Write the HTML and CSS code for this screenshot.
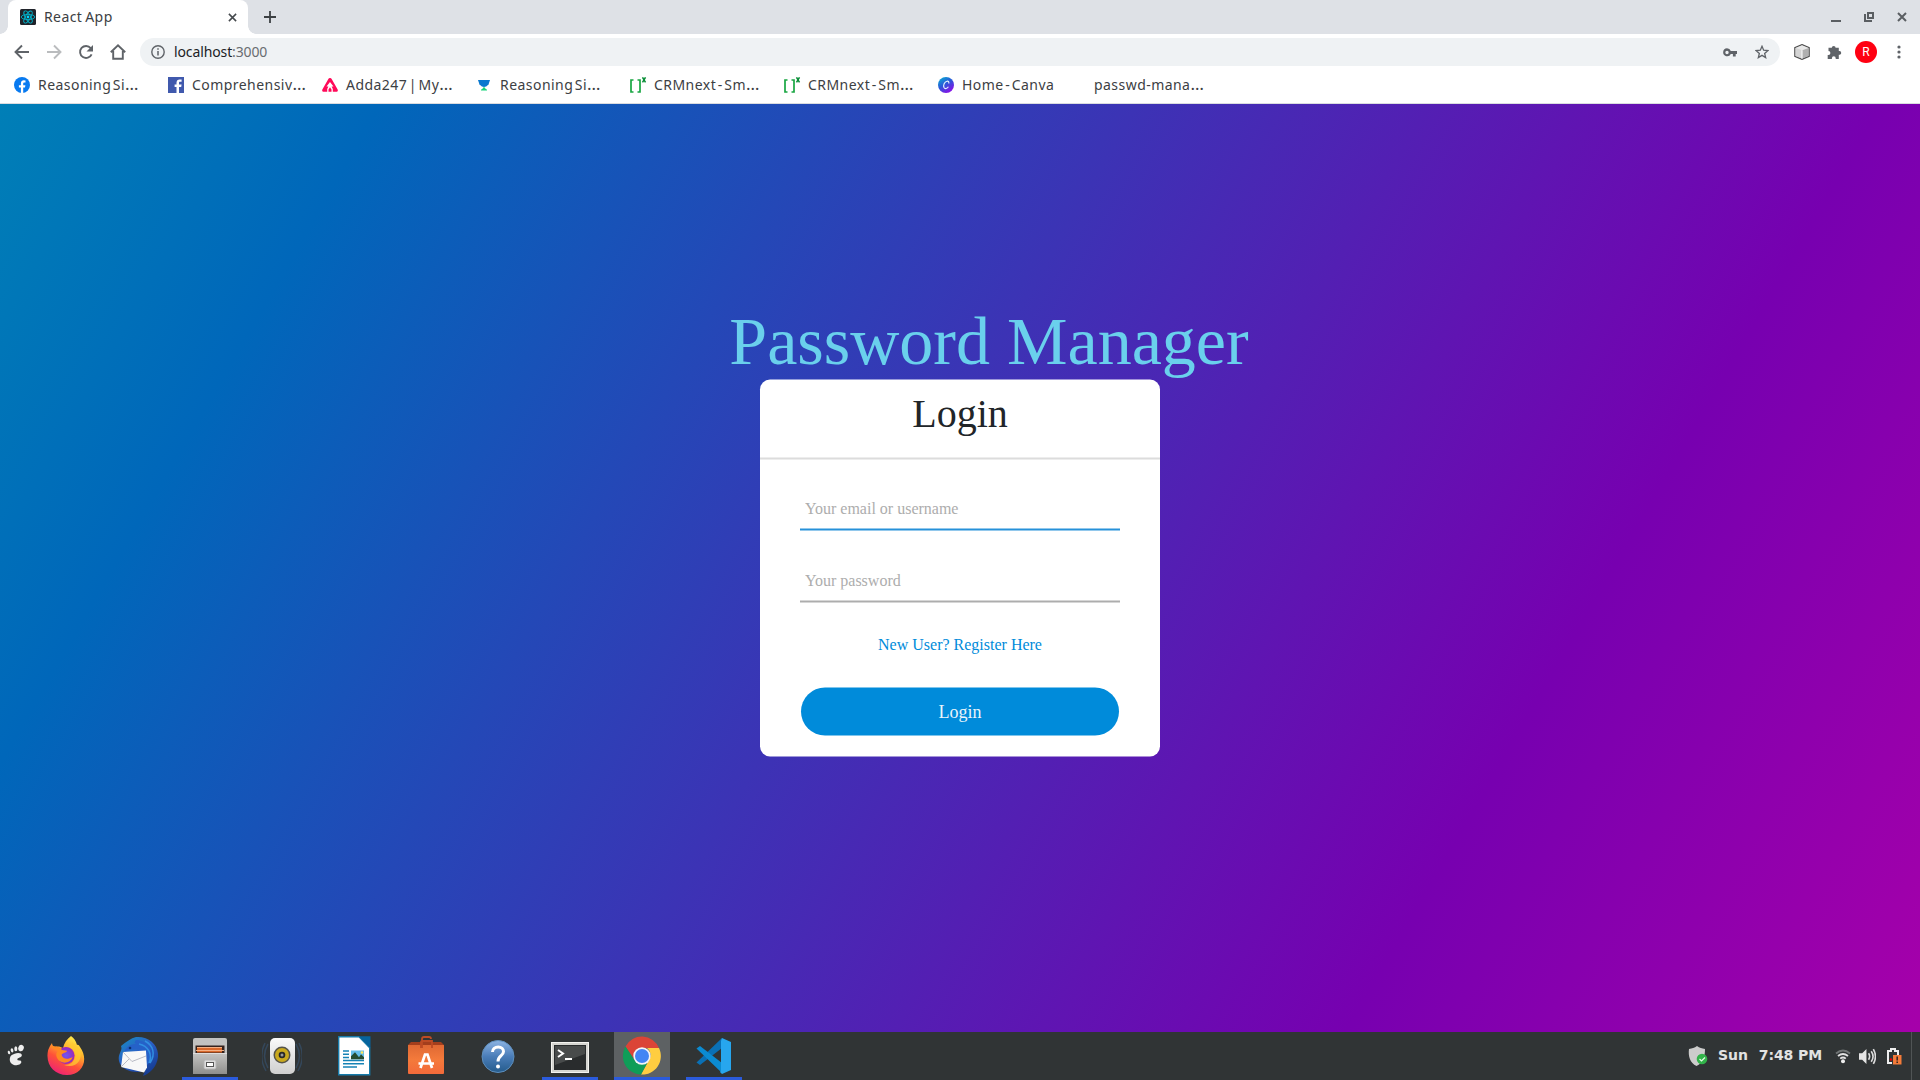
FILE: index.html
```html
<!DOCTYPE html>
<html lang="en">
<head>
<meta charset="utf-8">
<title>React App</title>
<link rel="stylesheet" href="styles.css">
</head>
<body>
<div class="screen">
  <header class="tabstrip">
    <div class="tab">
      <svg class="favicon" viewBox="0 0 16 16"><rect width="16" height="16" rx="1.5" fill="#20232a"/><g fill="none" stroke="#00b4cc" stroke-width=".9"><ellipse cx="8" cy="8" rx="6.8" ry="2.6"/><ellipse cx="8" cy="8" rx="6.8" ry="2.6" transform="rotate(60 8 8)"/><ellipse cx="8" cy="8" rx="6.8" ry="2.6" transform="rotate(120 8 8)"/></g><circle cx="8" cy="8" r="1.4" fill="#00d8ff"/></svg>
      <span class="tab-title">React App</span>
      <svg class="tab-close" viewBox="0 0 10 10"><path d="M1 1l8 8M9 1L1 9" stroke="#45494d" stroke-width="1.7"/></svg>
    </div>
    <svg class="new-tab" viewBox="0 0 12 12"><path d="M6 0v12M0 6h12" stroke="#3c4043" stroke-width="1.8"/></svg>
    <div class="window-controls">
      <svg width="10" height="14" viewBox="0 0 10 14"><path d="M0 11h10" stroke="#5a5e62" stroke-width="2"/></svg>
      <svg width="10" height="10" viewBox="0 0 10 10"><path d="M4 1h5v5H4zM1 2v7h7" fill="none" stroke="#5a5e62" stroke-width="2"/></svg>
      <svg width="10" height="10" viewBox="0 0 10 10"><path d="M1 1l8 8M9 1L1 9" stroke="#5a5e62" stroke-width="2"/></svg>
    </div>
  </header>

  <nav class="toolbar">
    <div class="nav-buttons">
      <svg viewBox="0 0 16 16"><path d="M15 8H2M8 1.5L1.5 8 8 14.5" fill="none" stroke="#5f6368" stroke-width="1.9"/></svg>
      <svg viewBox="0 0 16 16"><path d="M1 8h13M8 1.5L14.500 8 8 14.500" fill="none" stroke="#babcbe" stroke-width="1.9"/></svg>
      <svg viewBox="0 0 16 16"><path d="M13.600 10.300a6 6 0 1 1-.9-6.200l1 1.200" fill="none" stroke="#5f6368" stroke-width="1.900"/><path d="M15 1v6.500H8.500z" fill="#5f6368"/></svg>
      <svg viewBox="0 0 16 16"><path d="M.8 8.200L8 1.400l7.200 6.800M3.200 7v7.800h9.600V7" fill="none" stroke="#5f6368" stroke-width="1.900"/></svg>
    </div>
    <div class="omnibox">
      <svg class="info" viewBox="0 0 14 14"><circle cx="7" cy="7" r="6.200" fill="none" stroke="#5f6368" stroke-width="1.400"/><path d="M7 6v4.500M7 3.300v1.500" stroke="#5f6368" stroke-width="1.500"/></svg>
      <span class="url">localhost<span class="port">:3000</span></span>
      <svg class="key" viewBox="0 0 14 9"><path fill="#5f6368" fill-rule="evenodd" d="M4 .3a4 4 0 0 1 3.800 2.700H14v3h-1.300v2.600h-2.800V6H7.800A4 4 0 1 1 4 .3zM4 2.800a1.700 1.700 0 1 0 0 3.400 1.700 1.700 0 0 0 0-3.400z"/></svg>
      <svg class="star" viewBox="0 0 14 14"><path d="M7 1.300l1.650 3.950 4.250.35-3.250 2.800 1 4.150L7 10.350l-3.650 2.200 1-4.150L1.100 5.600l4.250-.35z" fill="none" stroke="#5f6368" stroke-width="1.300"/></svg>
    </div>
    <div class="extensions">
      <svg width="16" height="16" viewBox="0 0 16 16"><path d="M8 .6l7.200 3v8.800L8 15.400.8 12.400V3.600z" fill="#c9c9c9" stroke="#505050" stroke-width="1.200"/><path d="M1.500 4L8 6.200v8.400L1.500 12z" fill="#d4d4d4"/><path d="M8 6.200L14.500 4v8L8 14.600z" fill="#b0b0b0"/><path d="M8 1.300L14.500 4 8 6.200 1.500 4z" fill="#e8e8e8"/><path d="M8 6.200v8.400" stroke="#fff"/></svg>
      <svg width="15" height="15" viewBox="0 0 15 15"><path fill="#5f6368" d="M1.500 2.800h3.300a1.900 1.900 0 0 1 3.800 0h3.200v3.300a1.900 1.900 0 0 1 1.200 3.600l-1.200.1V14H8.700v-.8a1.900 1.900 0 0 0-3.800 0v.8H.7V9.900h.8a1.900 1.900 0 0 0 0-3.800z"/></svg>
      <span class="avatar">R</span>
      <svg width="4" height="14" viewBox="0 0 4 14"><g fill="#5f6368"><circle cx="2" cy="2" r="1.600"/><circle cx="2" cy="7" r="1.600"/><circle cx="2" cy="12" r="1.600"/></g></svg>
    </div>
  </nav>

  <div class="bookmarks">
    <div class="bookmark"><svg viewBox="0 0 16 16"><circle cx="8" cy="8" r="8" fill="#087af0"/><path d="M6.900 16v-5.500H4.900V8.200h2V6.500c0-2.200 1.200-3.200 3-3.200l1.600.1v2h-1c-1 0-1.300.5-1.300 1.200v1.600h2.200l-.4 2.300H9.200V16z" fill="#fff"/></svg><span>Reasoning Si<span class="more">…</span></span></div>
    <div class="bookmark"><svg viewBox="0 0 16 16"><path d="M0 0h16v16H0z" fill="#4059ad"/><path d="M8.500 16V9.900H6.600V7.500h1.900V5.700c0-2.100 1.200-3.300 3.200-3.300l1.900.1v2.200h-1.400c-1 0-1.200.5-1.200 1.200v1.600h2.600l-.4 2.400H11V16z" fill="#fff"/></svg><span>Comprehensiv<span class="more">…</span></span></div>
    <div class="bookmark"><svg viewBox="0 0 16 16"><path d="M6.200 2.200a2 2 0 0 1 3.600 0l5.700 10c.8 1.500.1 2.600-1.300 2.600H1.800c-1.400 0-2.100-1.100-1.300-2.600z" fill="#ff0a59"/><path d="M8 5l3.500 4.500H9.600L10.800 12v2.900H9.500V12.500L8 10.300 6.500 12.500v2.400H5.200V12l1.200-2.500H4.500z" fill="#fff"/></svg><span>Adda247 | My<span class="more">…</span></span></div>
    <div class="bookmark"><svg viewBox="0 0 16 16"><path d="M2 3h12l-1.500 4.500Q10 10 8 10T3.500 7.500z" fill="#0878cf"/><path d="M8 9.500q.5 2 3 3.300v.7H5v-.7q2.500-1.300 3-3.300z" fill="#18d47b"/></svg><span>Reasoning Si<span class="more">…</span></span></div>
    <div class="bookmark"><svg class="wide" viewBox="0 0 18 16"><path d="M4.500 3H2v12h2.500M8.500 3H11v12H8.500" fill="none" stroke="#18a642" stroke-width="1.700"/><path d="M13.500.3l3 5M16.500.3l-3 5" stroke="#078d35" stroke-width="1.500"/></svg><span>CRMnext - Sm<span class="more">…</span></span></div>
    <div class="bookmark"><svg class="wide" viewBox="0 0 18 16"><path d="M4.500 3H2v12h2.500M8.500 3H11v12H8.500" fill="none" stroke="#18a642" stroke-width="1.700"/><path d="M13.500.3l3 5M16.500.3l-3 5" stroke="#078d35" stroke-width="1.500"/></svg><span>CRMnext - Sm<span class="more">…</span></span></div>
    <div class="bookmark"><svg viewBox="0 0 16 16"><defs><linearGradient id="canva" x2=".65" y2="1"><stop stop-color="#05b8d2"/><stop offset=".5" stop-color="#285ad8"/><stop offset="1" stop-color="#8910e8"/></linearGradient></defs><circle cx="8" cy="8" r="8" fill="url(#canva)"/><path d="M10.700 6.500c.5-1.500-.3-2.600-1.700-2.300C6.300 4.800 5 8.500 6 10.600c.9 1.700 3.200 1.100 4.400-.8" fill="none" stroke="#e7f5ff" stroke-width="1.100"/></svg><span>Home - Canva</span></div>
    <div class="bookmark plain"><span>passwd-mana<span class="more">…</span></span></div>
  </div>

  <main class="page">
    <h1 class="brand">Password Manager</h1>
    <form class="card">
      <h2 class="card-title">Login</h2>
      <div class="fields">
        <input class="field active" type="text" placeholder="Your email or username">
        <input class="field" type="password" placeholder="Your password">
        <a class="register">New User? Register Here</a>
        <button class="submit" type="button">Login</button>
      </div>
    </form>
  </main>

  <footer class="taskbar">
    <svg class="menu" viewBox="0 0 20 24"><g fill="#eee"><ellipse cx="15.600" cy="3.700" rx="3" ry="3.700" transform="rotate(20 15.600 3.700)"/><ellipse cx="9.800" cy="4.400" rx="1.700" ry="2.800"/><ellipse cx="5.600" cy="6.300" rx="1.500" ry="2.300" transform="rotate(-10 5.600 6.300)"/><ellipse cx="2.200" cy="8.700" rx="1.300" ry="2" transform="rotate(-20 2.200 8.700)"/><path d="M8.500 10c4-1.500 8-.6 8 1.700 0 3-5 2.300-5 4.800 0 1.600 3.300.4 4.200 2 1.100 2.100-2 4.300-5.300 4.300-5 0-8-3.500-7.200-7.800C3.600 12.300 5.700 10.700 8.500 10z"/></g></svg>
    <div class="apps">
      <div class="app">
        <svg viewBox="0 0 40 40"><defs><linearGradient id="fox" x1=".8" y1="0" x2=".3" y2="1"><stop stop-color="#fff44f"/><stop offset=".35" stop-color="#ffb52c"/><stop offset=".65" stop-color="#ff5238"/><stop offset="1" stop-color="#ed2177"/></linearGradient><radialGradient id="globe"><stop stop-color="#6f57f4"/><stop offset="1" stop-color="#9b28ba"/></radialGradient></defs><path d="M25 0c3 2 5 5 6 9 1-.5 2 0 3 2 9 12 3 28-13 28C9 39 1 30 1.500 19 1.700 13 4 10 6 7c0 2 1 3 3 4 3-1 6 0 8 1 1-5 4-9 8-12z" fill="url(#fox)"/><circle cx="20" cy="19.500" r="8.500" fill="url(#globe)"/><path d="M4 11c4-2 10 0 12 3l5 .8c0 2-5 2-5.400 4.200 1 4 6 5 11 2-2 7-13 8-16 0-.9-3 .2-5 1.200-6z" fill="#ff8a22"/><path d="M22 11c5 1 8 5 7 10-1 5-5 8-11 8 12 4 19-5 16-14-2-5-5-6-8-9 0 4-2 3-4 5z" fill="#ffcb32" opacity=".75"/></svg>
      </div>
      <div class="app">
        <svg viewBox="0 0 40 40"><defs><linearGradient id="bird" x2=".7" y2="1"><stop stop-color="#178fc3"/><stop offset=".5" stop-color="#2a5fc6"/><stop offset="1" stop-color="#153b91"/></linearGradient></defs><path d="M3 10C8 6 13 2 18 1c13-1 23 8 22 20-1 9-7 16-15 19l2-5C15 38 3 34 1 25-.500 17 5 15 3 10z" fill="url(#bird)"/><path d="M18 4c10 0 17 9 15 18-1 5-4 7-6 9 4-10 1-17-8-18-6-.5-9 1-13 4 2-7 7-9 12-9-1-1-2-2 0-4z" fill="#2561c8"/><path d="M5 16l23-1.500 1 17-3 5L3 31z" fill="#f8f8f8"/><path d="M5 16l9 9.500L28 20M3 31l8-8" fill="none" stroke="#b9bbc5" stroke-width="1"/><path d="M21 8c9 2 14 10 10 19M27 5c8 4 11 13 5 22" fill="none" stroke="#318fe2" stroke-width="1.500"/><circle cx="12" cy="12" r="1.300" fill="#0a3070"/></svg>
      </div>
      <div class="app running">
        <svg viewBox="0 0 40 40"><defs><linearGradient id="metal" x2="0" y2="1"><stop stop-color="#c4c4c2"/><stop offset="1" stop-color="#8f8f8d"/></linearGradient></defs><path d="M3 4q0-2 2-2h30q2 0 2 2v33H3z" fill="#c2c2c0"/><path d="M5.500 9.500h29V17h-29z" fill="#35231d"/><path d="M7 11.500h25v5H7z" fill="#d9692b"/><path d="M7 11.500h25M6 14.500h28" stroke="#f5b083" stroke-width="1"/><path d="M3 17h34v21H3z" fill="url(#metal)"/><path d="M3 17.500h34" stroke="#dedede"/><rect x="14" y="24" width="12" height="9" rx="1.500" fill="#dedede" stroke="#b4b4b4"/><rect x="16.500" y="26.500" width="7" height="4" fill="#fff" stroke="#555"/></svg>
      </div>
      <div class="app">
        <svg viewBox="0 0 40 40"><defs><linearGradient id="speaker" x2="0" y2="1"><stop stop-color="#fafafa"/><stop offset="1" stop-color="#cfcfcf"/></linearGradient></defs><path d="M6 8q-7 12 0 24M34 8q7 12 0 24M3 7q-7 14 1 28M37 7q7 14-1 28" fill="none" stroke="#34475a" stroke-width="1.500"/><rect x="8" y="2" width="25" height="36" rx="5" fill="url(#speaker)"/><circle cx="20" cy="19" r="8.500" fill="#55534a"/><circle cx="20" cy="19" r="7" fill="#c9a91e"/><circle cx="20" cy="19" r="3.300" fill="#272727"/><circle cx="20" cy="19" r="1.500" fill="#9a9a9a"/></svg>
      </div>
      <div class="app">
        <svg viewBox="0 0 40 40"><path d="M4.700.7H25l10.700 11v27h-31z" fill="#fff" stroke="#177baa" stroke-width="1.400"/><path d="M25 .3h11.500v12z" fill="#06649e"/><path d="M9 15h6M9 18.200h6M9 21.400h6M9 24.600h21M9 27.800h21M9 31h14" stroke="#1683b5" stroke-width="1.500"/><path d="M17 14.500h13v8.800H17z" fill="#65bdea"/><path d="M17 23.300v-3l4-4 4 5 2-3 3 3v2z" fill="#264c31"/><circle cx="28" cy="16.500" r="1.300" fill="#ffe95a"/></svg>
      </div>
      <div class="app">
        <svg viewBox="0 0 40 40"><defs><linearGradient id="bag" x2="0" y2="1"><stop stop-color="#df6934"/><stop offset=".5" stop-color="#f47a3b"/><stop offset="1" stop-color="#f36a3a"/></linearGradient></defs><path d="M2 9l3-3h30l3 3z" fill="#a33e1d"/><path d="M2 9h36v28q0 1-1 1H3q-1 0-1-1z" fill="url(#bag)"/><path d="M16 12V3q0-2 2-2h5q2 0 2 2M15 12V6q0-1 1-1h10v7" fill="none" stroke="#bd4b24" stroke-width="1.800"/><path d="M14.500 32L19 18.500h2.500L26 32M12.500 27.500h15.500" fill="none" stroke="#fff" stroke-width="2.700"/></svg>
      </div>
      <div class="app">
        <svg viewBox="0 0 40 40"><defs><linearGradient id="help" x2="0" y2="1"><stop stop-color="#8db4e3"/><stop offset=".5" stop-color="#4a7db8"/><stop offset="1" stop-color="#245b8c"/></linearGradient></defs><circle cx="20" cy="20.500" r="16" fill="url(#help)" stroke="#5e8fbd"/><path d="M14.500 16c0-3 2.500-5 5.700-5 3.300 0 5.300 2 5.300 4.500 0 4.500-5.500 4-5.500 10" fill="none" stroke="#fff" stroke-width="3"/><circle cx="20" cy="30.500" r="2" fill="#fff"/></svg>
      </div>
      <div class="app running">
        <svg viewBox="0 0 40 40"><rect x="1.500" y="6.500" width="37" height="30" fill="#d5d5d1" stroke="#f4f4f1"/><path d="M4 9h32v25H4z" fill="#292c2d"/><path d="M5 10h30v8L5 29z" fill="#484b4b"/><path d="M8 14l5 3.500L8 21M15 23h7" fill="none" stroke="#fff" stroke-width="2"/></svg>
      </div>
      <div class="app running focused">
        <svg viewBox="0 0 40 40"><path d="M3.500 10.500A18.500 18.500 0 0 1 37 12H20a8.500 8.500 0 0 0-7.800 11.500z" fill="#db4437"/><path d="M37 12a18.500 18.500 0 0 1-18 26.500l8.200-14.700A8.500 8.500 0 0 0 25 12z" fill="#ffcd40"/><path d="M3.500 10.500A18.500 18.500 0 0 0 19 38.500l7.600-14.200a8.500 8.500 0 0 1-14-.1z" fill="#0f9d58"/><circle cx="20" cy="20" r="8.700" fill="#f5f5f5"/><circle cx="20" cy="20" r="7" fill="#4285f4"/></svg>
      </div>
      <div class="app running">
        <svg viewBox="0 0 40 40"><path d="M2.500 26.500L28 2v10L6 29z" fill="#0a70b5"/><path d="M2.500 12.500L6 10l22 17v10z" fill="#0b8bd2"/><path d="M28 2l9 4v28l-9 4-2-2 1-1V5z" fill="#27a6ee"/></svg>
      </div>
    </div>
    <div class="tray">
      <svg class="shield" viewBox="0 0 20 22"><path d="M9 1c2.500 2 5 2.500 8 3 0 8-2 14-8.500 17C2 18 0 11 1 4c3-.5 5.500-1 8-3z" fill="#ccc"/><circle cx="14" cy="14" r="5.300" fill="#32b34a"/><path d="M11.500 14l2 2 3.500-3.500" fill="none" stroke="#e6ffe9" stroke-width="1.200"/></svg>
      <span class="clock"><span>Sun</span><span>7:48 PM</span></span>
      <svg class="wifi" viewBox="0 0 16 16"><path d="M1 5.500q7-6 14 0" fill="none" stroke="#717575" stroke-width="1.800"/><path d="M3 8q5-4 10 0M5.200 10.600q2.800-2.200 5.600 0" fill="none" stroke="#e2e2e2" stroke-width="1.800"/><circle cx="8" cy="13.300" r="2" fill="#eee"/></svg>
      <svg class="sound" viewBox="0 0 16 16"><path d="M0 5h3l4-4v14l-4-4H0z" fill="#e4e4e4"/><path d="M9 5q2 3 0 6M11.500 3q3.500 5 0 10M13.500 1q4 7 0 14" fill="none" stroke="#ddd" stroke-width="1.500"/></svg>
      <svg class="battery" viewBox="0 0 16 18"><path d="M6 16H2V4h3V2h4v2h3v4" fill="none" stroke="#eee" stroke-width="2"/><circle cx="5" cy="12.500" r="1.200" fill="#e00"/><rect x="7" y="8" width="8.500" height="9.500" fill="#f47b39"/><path d="M11.200 9.500v4M11.200 14.500V16" stroke="#3a2620" stroke-width="1.600"/></svg>
    </div>
    <div class="show-desktop"></div>
  </footer>
</div>
</body>
</html>
```

FILE: styles.css
```css
* { box-sizing: border-box; }
body { margin: 0; font-family: "Noto Sans", sans-serif; color: #3c4043; }
svg { display: block; flex: none; }
.screen { width: 1920px; height: 1080px; display: flex; flex-direction: column; overflow: hidden; background: #fff; }

.tabstrip { height: 34px; display: flex; align-items: center; background: #dee1e6; padding-left: 8px; }
.tab { position: relative; width: 240px; height: 34px; display: flex; align-items: center; padding: 0 11px 0 12px; background: #fff; border-radius: 8px 8px 0 0; }
.tab::before, .tab::after { content: ""; position: absolute; bottom: 0; width: 8px; height: 8px; }
.tab::before { left: -8px; background: radial-gradient(circle at 0 0, transparent 7.5px, #fff 8px); }
.tab::after { right: -8px; background: radial-gradient(circle at 100% 0, transparent 7.5px, #fff 8px); }
.favicon { width: 16px; height: 16px; }
.tab-title { margin-left: 8px; padding-bottom: 2px; font-size: 14px; letter-spacing: .4px; word-spacing: -1px; }
.tab-close { width: 9px; height: 9px; margin-left: auto; }
.new-tab { width: 12px; height: 12px; margin-left: 16px; }
.window-controls { display: flex; align-items: center; gap: 23px; margin-left: auto; padding-right: 13px; }

.toolbar { height: 36px; display: flex; align-items: center; padding: 0 17px 0 14px; }
.nav-buttons { display: flex; gap: 16px; width: 126px; }
.nav-buttons svg { width: 16px; height: 16px; }
.omnibox { width: 1640px; height: 28px; border-radius: 14px; background: #eff2f4; display: flex; align-items: center; padding: 0 11px; }
.info { width: 14px; height: 14px; }
.url { margin-left: 9px; padding-bottom: 1px; font-size: 14px; letter-spacing: -.12px; color: #202124; }
.port { color: #696d71; }
.key { width: 14px; height: 9px; margin-left: auto; }
.star { width: 14px; height: 14px; margin-left: 18px; }
.extensions { display: flex; align-items: center; margin-left: 14px; }
.extensions svg:nth-child(2) { margin-left: 17px; }
.avatar { width: 22px; height: 22px; border-radius: 50%; margin: 0 20px 0 13px; background: #ff0012; color: #fff; font: 12px/22px Roboto, sans-serif; text-align: center; }

.bookmarks { height: 34px; display: flex; padding: 0 14px; border-bottom: 1px solid #dadce0; }
.bookmark { width: 154px; height: 30px; display: flex; align-items: center; gap: 8px; font-size: 14px; line-height: 18px; letter-spacing: .45px; word-spacing: -2.5px; white-space: nowrap; }
.bookmark svg { width: 16px; height: 16px; }
.bookmark svg.wide { width: 18px; margin: 0 -1px 0 -1px; }
.bookmark.plain { padding-left: 2px; }
.more { font-size: 17px; line-height: 14px; }

.page { height: 928px; display: flex; flex-direction: column; align-items: center; background: linear-gradient(120deg, #007fb7 0%, #0067ba 15.500%, #7700b0 76.600%, #a600aa 100%); font-family: "Liberation Serif", serif; }
.brand { margin: 199px 0 0 58px; font-size: 68px; line-height: 76px; font-weight: 400; color: #6ad0ec; }
.card { width: 400px; height: 377px; background: #fff; border-radius: 10px; transform: translateY(.5px); }
.card-title { margin: 0; height: 79.5px; padding-top: 10px; font-size: 40px; line-height: 48px; font-weight: 400; text-align: center; color: #212529; border-bottom: 2px solid #dcdcdc; }
.fields { display: flex; flex-direction: column; padding: 29.5px 40px 0; }
.field { height: 42px; padding: 0 5px; border: 0; border-bottom: 2px solid #adadad; outline: 0; background: none; font: 16px "Liberation Serif", serif; margin-bottom: 30px; }
.field::placeholder { color: #adadad; opacity: 1; }
.field.active { border-color: #2691d9; }
.register { text-align: center; font-size: 16px; line-height: 24px; color: #008bda; }
.submit { height: 48px; margin: 31px 1px 0; border: 0; border-radius: 25px; background: #008bda; color: #e9f4fb; font: 18px "Liberation Serif", serif; }

.taskbar { height: 48px; display: flex; align-items: flex-start; background: #303435; }
.menu { width: 18px; height: 23px; margin: 12px 13px 0 7px; }
.apps { display: flex; gap: 16px; }
.app { width: 56px; height: 48px; display: flex; justify-content: center; padding-top: 4px; border-bottom: 3px solid transparent; }
.app svg { width: 40px; height: 40px; }
.running { border-color: #2b5bdc; }
.focused { background: #5d6163; }
.tray { height: 48px; display: flex; align-items: center; margin-left: auto; padding-right: 9px; }
.show-desktop { width: 9px; height: 48px; border-left: 1px solid #505455; }
.shield { width: 20px; height: 22px; }
.clock { display: flex; gap: 11px; margin: -2px 13px 0 10px; font: bold 14px "DejaVu Sans", sans-serif; letter-spacing: -.1px; color: #e2e2e2; }
.wifi { width: 16px; height: 16px; }
.sound { width: 17px; height: 17px; margin-left: 8px; }
.battery { width: 16px; height: 18px; margin-left: 10px; }
```
